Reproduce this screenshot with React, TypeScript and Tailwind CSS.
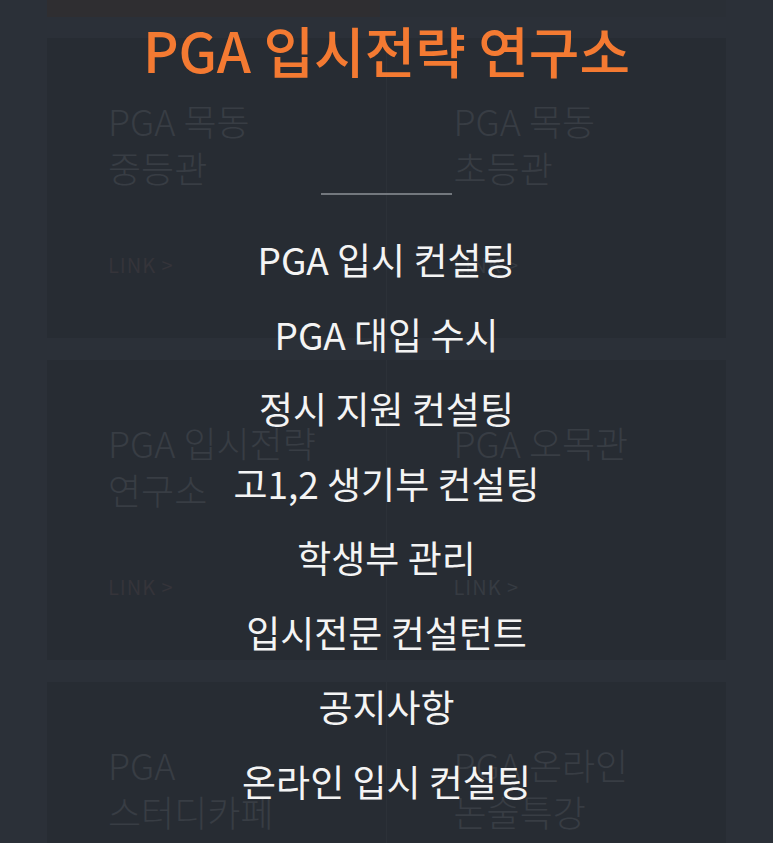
import React from "react";

const font = { fontFamily: '"Noto Sans CJK KR", "Noto Sans", sans-serif' };

const cards: { left: string[]; right: string[] }[] = [
  { left: ["PGA 목동", "중등관"], right: ["PGA 목동", "초등관"] },
  { left: ["PGA 입시전략", "연구소"], right: ["PGA 오목관"] },
  { left: ["PGA", "스터디카페"], right: ["PGA 온라인", "논술특강"] },
];

const menu = [
  "PGA 입시 컨설팅",
  "PGA 대입 수시",
  "정시 지원 컨설팅",
  "고1,2 생기부 컨설팅",
  "학생부 관리",
  "입시전문 컨설턴트",
  "공지사항",
  "온라인 입시 컨설팅",
];

function Cell({ lines, left }: { lines: string[]; left: boolean }) {
  return (
    <div
      className={`flex flex-col h-full pt-[59px] pb-[59px] ${
        left ? "pl-[61px] border-r border-[#2c3138]" : "pl-[67px]"
      }`}
    >
      <div className="text-[36px] leading-[47px] text-[#383d44] font-light">
        {lines.map((l) => (
          <div key={l}>{l}</div>
        ))}
      </div>
      <div
        className={`mt-auto text-[20px] leading-[28px] tracking-[1px] ${
          left ? "text-[#35343a]" : "text-[#363b42]"
        }`}
      >
        LINK &gt;
      </div>
    </div>
  );
}

export default function App() {
  return (
    <div className="relative w-[773px] h-[843px] overflow-hidden bg-[#2b3038]" style={font}>
      {/* background page */}
      <div className="flex flex-col">
        <div className="flex h-[17px] px-[47px]">
          <div className="w-[333px] bg-[#2f2e31]" />
          <div className="flex-1 bg-[#2a2f36]" />
        </div>
        <div className="flex flex-col gap-[22px] pt-[21px] px-[47px]">
          {cards.map((c, i) => (
            <div key={i} className="grid grid-cols-2 h-[300px] bg-[#272c33]">
              <Cell lines={c.left} left />
              <Cell lines={c.right} left={false} />
            </div>
          ))}
        </div>
      </div>

      {/* overlay menu */}
      <div className="absolute inset-0 flex flex-col items-center">
        <h1 className="mt-[14px] text-[55px] leading-[70px] font-medium text-[#f47a32]">
          PGA 입시전략 연구소
        </h1>
        <div className="mt-[109px] w-[131px] h-[2px] bg-[#73787e]" />
        <ul className="mt-[39px] flex flex-col items-center gap-[24.5px]">
          {menu.map((m) => (
            <li key={m} className="text-[37px] leading-[50px] text-[#f4f4f4] font-normal">
              {m}
            </li>
          ))}
        </ul>
      </div>
    </div>
  );
}
